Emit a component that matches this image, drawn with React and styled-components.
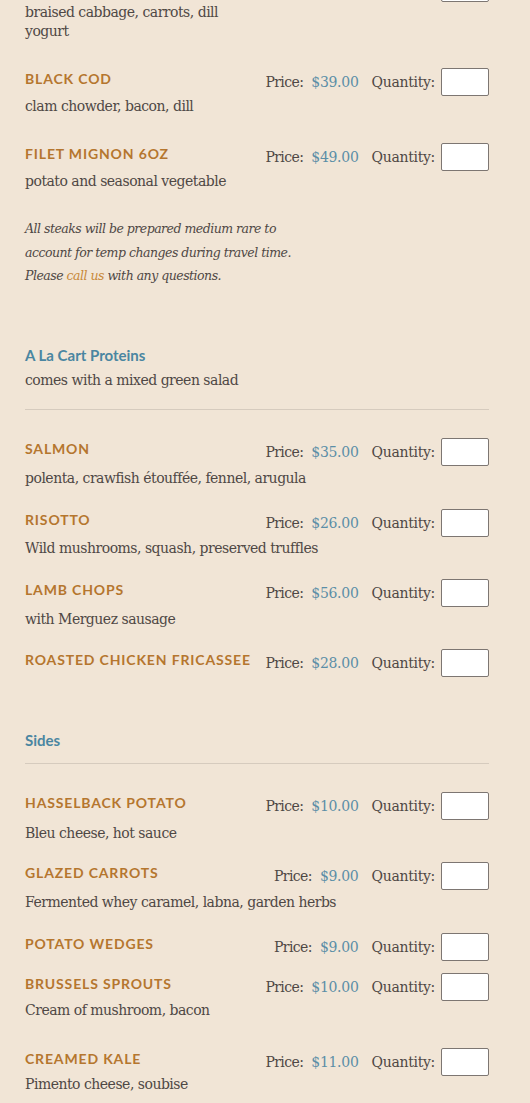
import React from "react";
import styled, { createGlobalStyle } from "styled-components";

const GlobalStyle = createGlobalStyle`
  html, body {
    margin: 0;
    padding: 0;
    background: #f1e5d6;
  }
  body {
    font-family: "DejaVu Serif", "Liberation Serif", serif;
    color: #4f4845;
    overflow: hidden;
  }
`;

const Page = styled.div`
  padding: 0 41px 0 25px;
  display: flex;
  flex-direction: column;
`;

const Section = styled.section`
  display: flex;
  flex-direction: column;
  margin-top: ${(p) => p.$top}px;
`;

const SectionTitle = styled.h2`
  margin: 0;
  font-family: "Lato", "Open Sans", sans-serif;
  font-weight: 700;
  font-size: 15px;
  line-height: 20px;
  color: #4a86a1;
`;

const Desc = styled.p`
  margin: 0;
  font-size: 14px;
  letter-spacing: -0.5px;
  line-height: ${(p) => p.$lh || 20}px;
`;

const SectionSub = styled(Desc)`
  margin-top: 5px;
`;

const Divider = styled.hr`
  border: 0;
  height: 1px;
  background: #d6cbbe;
  margin: ${(p) => p.$top}px 0 28px;
`;

const Name = styled.h3`
  margin: 0;
  font-family: "Lato", "Open Sans", sans-serif;
  font-weight: 700;
  font-size: 14px;
  line-height: 20px;
  letter-spacing: 0.85px;
  text-transform: uppercase;
  color: #b5762e;
  white-space: nowrap;
`;

/* stacked variant (steaks) */
const StackItem = styled.div`
  display: flex;
  justify-content: space-between;
  align-items: flex-start;
  margin-bottom: 27px;
`;

const StackText = styled.div`
  width: 236px;
  display: flex;
  flex-direction: column;
  padding-top: 1px;
  & > p {
    margin-top: 8px;
  }
`;

/* row variant */
const Item = styled.div`
  display: flex;
  flex-direction: column;
  margin-top: ${(p) => p.$space}px;
`;

const Row = styled.div`
  display: flex;
  justify-content: space-between;
  align-items: center;
  height: 28px;
  & > h3 {
    padding-bottom: 6px;
  }
`;

const RowDesc = styled(Desc)`
  margin-top: ${(p) => p.$gap}px;
`;

const Pricing = styled.div`
  display: flex;
  align-items: center;
  flex-shrink: 0;
  font-size: 14px;
  letter-spacing: -0.3px;
`;

const PriceLabel = styled.span`
  margin-right: 8px;
  letter-spacing: -0.6px;
`;

const PriceValue = styled.span`
  color: #5b8ea7;
  margin-right: 13px;
`;

const QtyLabel = styled.label`
  margin-right: 6px;
`;

const QtyInput = styled.input`
  box-sizing: border-box;
  width: 48px;
  height: 28px;
  margin: 0;
  padding: 2px 4px;
  border: 1px solid #7d7672;
  border-radius: 2px;
  background: #fff;
  font: inherit;
`;

const Note = styled.p`
  margin: -1px 0 0;
  max-width: 300px;
  font-style: italic;
  font-size: 12.5px;
  letter-spacing: -0.5px;
  line-height: 23.5px;
`;

const CallLink = styled.a`
  color: #c8893a;
  text-decoration: none;
`;

function PriceBox({ price }) {
  return (
    <Pricing>
      <PriceLabel>Price:</PriceLabel>
      <PriceValue>{price}</PriceValue>
      <QtyLabel>Quantity:</QtyLabel>
      <QtyInput type="text" />
    </Pricing>
  );
}

const steaks = [
  { name: "Short Rib", price: "$34.00", desc: "braised cabbage, carrots, dill yogurt" },
  { name: "Black Cod", price: "$39.00", desc: "clam chowder, bacon, dill" },
  { name: "Filet Mignon 6oz", price: "$49.00", desc: "potato and seasonal vegetable" },
];

const proteins = [
  { name: "Salmon", price: "$35.00", desc: "polenta, crawfish étouffée, fennel, arugula", space: 0, gap: 2 },
  { name: "Risotto", price: "$26.00", desc: "Wild mushrooms, squash, preserved truffles", space: 21, gap: 1 },
  { name: "Lamb Chops", price: "$56.00", desc: "with Merguez sausage", space: 21, gap: 2 },
  { name: "Roasted Chicken Fricassee", price: "$28.00", space: 20 },
];

const sides = [
  { name: "Hasselback Potato", price: "$10.00", desc: "Bleu cheese, hot sauce", space: 0, gap: 3 },
  { name: "Glazed Carrots", price: "$9.00", desc: "Fermented whey caramel, labna, garden herbs", space: 19, gap: 2 },
  { name: "Potato Wedges", price: "$9.00", space: 21 },
  { name: "Brussels Sprouts", price: "$10.00", desc: "Cream of mushroom, bacon", space: 12, gap: -1 },
  { name: "Creamed Kale", price: "$11.00", desc: "Pimento cheese, soubise", space: 28, gap: -2 },
];

function RowItem({ item }) {
  return (
    <Item $space={item.space}>
      <Row>
        <Name>{item.name}</Name>
        <PriceBox price={item.price} />
      </Row>
      {item.desc && <RowDesc $gap={item.gap}>{item.desc}</RowDesc>}
    </Item>
  );
}

export default function App() {
  return (
    <>
      <GlobalStyle />
      <Page>
        <Section $top={-26}>
          {steaks.map((s) => (
            <StackItem key={s.name}>
              <StackText>
                <Name>{s.name}</Name>
                <Desc $lh={19}>{s.desc}</Desc>
              </StackText>
              <PriceBox price={s.price} />
            </StackItem>
          ))}
          <Note>
            All steaks will be prepared medium rare to account for temp changes
            during travel time. Please <CallLink href="#">call us</CallLink> with
            any questions.
          </Note>
        </Section>

        <Section $top={57.5}>
          <SectionTitle>A La Cart Proteins</SectionTitle>
          <SectionSub>comes with a mixed green salad</SectionSub>
          <Divider $top={19} />
          {proteins.map((p) => (
            <RowItem key={p.name} item={p} />
          ))}
        </Section>

        <Section $top={53}>
          <SectionTitle>Sides</SectionTitle>
          <Divider $top={13} />
          {sides.map((p) => (
            <RowItem key={p.name} item={p} />
          ))}
        </Section>
      </Page>
    </>
  );
}
